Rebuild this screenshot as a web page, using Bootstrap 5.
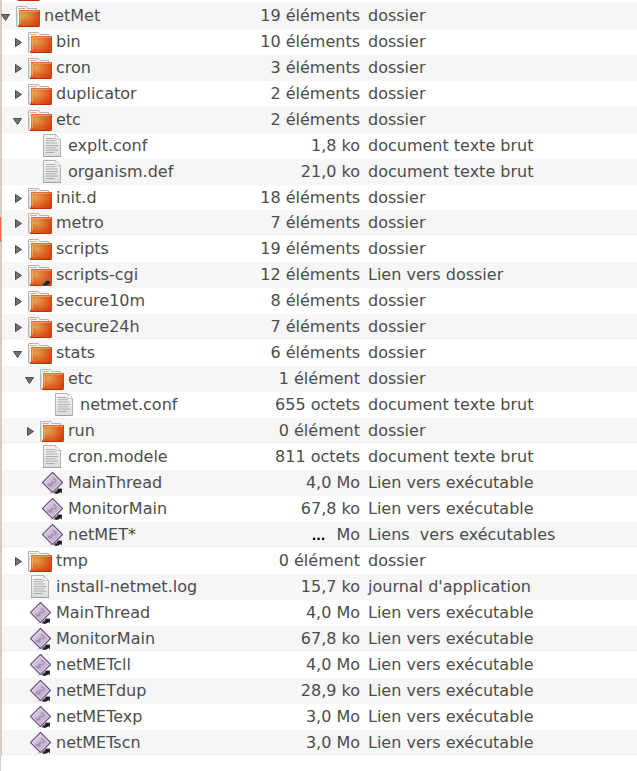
<!DOCTYPE html>
<html lang="fr">
<head>
<meta charset="utf-8">
<meta name="viewport" content="width=device-width, initial-scale=1">
<title>netMet</title>
<link rel="stylesheet" href="https://cdn.jsdelivr.net/npm/bootstrap@5.3.0/dist/css/bootstrap.min.css">
<script src="https://cdn.jsdelivr.net/npm/bootstrap@5.3.0/dist/js/bootstrap.bundle.min.js" defer></script>
<style>
body{font-family:"DejaVu Sans",sans-serif;font-size:16px;line-height:24px;color:#4c4c4c;background:#fff}
.pane{border-left:1px solid #dcd0ca}
.tree-pane{border-left:1px solid #d3c5be}
.above{height:3px;padding:0 0 1px 14px}
.tree{table-layout:fixed}
.tree tr{height:26px}
.tree tr.tight{height:25px}
.tree tr:nth-child(odd){background:#f6f6f6}
.tree td{padding:1px 0 0;vertical-align:top;white-space:nowrap}
.c-name{width:232px}
.c-size{width:126px}
.tree td:nth-child(2){text-align:right}
.tree td:nth-child(3){padding-left:8px}
.entry{gap:4px}
.l1{padding-left:12px}
.l2{padding-left:24px}
.l3{padding-left:36px}
.twist{width:10px;height:24px;flex:none;display:block}
.twist svg{display:block;width:10px;height:24px;overflow:visible}
.ico{width:24px;height:24px;flex:none;display:block;overflow:visible}
.dots{font-size:12px;color:#000;margin-right:6px}
.marker{top:217px;left:0;width:1px;height:25px;background:#f0683c}
</style>
</head>
<body>
<svg width="0" height="0" class="position-absolute" aria-hidden="true">
<defs>
<radialGradient id="gf" cx=".28" cy=".32" r=".8"><stop offset="0" stop-color="#e8a04f"/><stop offset=".5" stop-color="#dd702c"/><stop offset="1" stop-color="#d4410f"/></radialGradient>
<linearGradient id="gp" x1="0" y1="0" x2="0" y2="1"><stop offset="0" stop-color="#f6f6f6"/><stop offset="1" stop-color="#dcdcdc"/></linearGradient>
<linearGradient id="gd" x1="0" y1="0" x2="1" y2="1"><stop offset="0" stop-color="#ddd3e4"/><stop offset="1" stop-color="#b5a2c3"/></linearGradient>
<symbol id="folder" viewBox="0 0 24 24" overflow="visible">
<path d="M.5 22.500V2.500H10.500L11.500 4.500H20.500V8" fill="#f8f7f6" stroke="#b7b5b4"/>
<path d="M2 4.500H9" stroke="#efa67c"/>
<path d="M1.500 22V7" stroke="#dedbd9"/>
<path d="M3 6H24V21.500Q24 23 22.500 23H1.500L3 20Z" fill="url(#gf)"/>
<path d="M3 6.500H24" stroke="#dc6a3c"/>
<path d="M4.500 20V7.500H23" fill="none" stroke="#f3b57c" stroke-opacity=".6"/>
<path d="M23.500 7V21" stroke="#c94518" stroke-opacity=".7"/>
<path d="M2 22.500H23" stroke="#bd3009"/>
</symbol>
<symbol id="emblem" viewBox="0 0 24 24" overflow="visible">
<path d="M14 22.500q0-3 3.500-3.500l-1-1.500h5.500v5l-1.500-1.200q-2 1.700-4 1.700z" fill="#1c1c1c" stroke="#fff" stroke-opacity=".45" stroke-width=".5"/>
<path d="M15 21.500q1-1.200 2.500-1.300" fill="none" stroke="#777" stroke-width=".7"/>
</symbol>
<symbol id="doc" viewBox="0 0 24 24">
<path d="M3.500.500H15.500L20.500 5.500V22.500H3.500Z" fill="url(#gp)" stroke="#b4b4b4"/>
<path d="M15.500.500Q16.500 4.500 15.500 5.500H20.500Z" fill="#fff" stroke="#b9b9b9" stroke-width=".8"/>
<path d="M6 4.500H14M6 6.700H15M6 9H17M6 11.500H18M6 13.800H16M6 16.100H18M6 18.500H14" stroke="#a6a6a6" stroke-width=".9" stroke-linecap="round"/>
<path d="M3 22.500H21" stroke="#a0a0a0"/>
</symbol>
<symbol id="exe" viewBox="0 0 24 24" overflow="visible">
<path d="M12.500 1.500L22.500 11.500L12.500 21.500L2.500 11.500Z" fill="url(#gd)" stroke="#6d4d7f" stroke-width="1.100" stroke-linejoin="round"/>
<path d="M12.500 3.200L20.800 11.500L12.500 19.800L4.200 11.500Z" fill="none" stroke="#f0eaf4" stroke-width=".8"/>
<path d="M13.500 6.500l3 2 0 2-1.500 2-2-.5-1 3.500-3 .5-2-2 1-1.500 2 .5 1-2 2-1z" fill="#9b83ad" fill-opacity=".7"/>
<path d="M13 10.500l2-1" stroke="#ddd3e5"/>
<path d="M8 22.500l4-2 3 2z" fill="#777" fill-opacity=".3"/>
<use href="#emblem" width="24" height="24"/>
</symbol>
<symbol id="folderlink" viewBox="0 0 24 24" overflow="visible"><use href="#folder" width="24" height="24"/><use href="#emblem" width="24" height="24"/></symbol>
<symbol id="right" viewBox="0 0 10 24" overflow="visible"><path d="M1.500 8.500V16.500L7.500 12.500Z" fill="#727272" stroke="#4b4b4b"/></symbol>
<symbol id="down" viewBox="0 0 10 24" overflow="visible"><path d="M-.500 10.500H7.500L3.500 16.500Z" fill="#727272" stroke="#4b4b4b"/></symbol>
</defs>
</svg>
<main class="pane position-relative min-vh-100">
<div class="tree-pane">
<div class="above d-flex align-items-end overflow-hidden"><svg class="ico" aria-hidden="true"><use href="#folder"/></svg></div>
<table class="tree w-100">
<colgroup><col class="c-name"><col class="c-size"><col></colgroup>
<tbody>
<tr><td><div class="entry d-flex"><button class="twist btn p-0 border-0" aria-label="Replier netMet"><svg><use href="#down"/></svg></button><svg class="ico"><use href="#folder"/></svg><span>netMet</span></div></td><td>19 éléments</td><td>dossier</td></tr>
<tr><td><div class="entry d-flex l1"><button class="twist btn p-0 border-0" aria-label="Déplier bin"><svg><use href="#right"/></svg></button><svg class="ico"><use href="#folder"/></svg><span>bin</span></div></td><td>10 éléments</td><td>dossier</td></tr>
<tr><td><div class="entry d-flex l1"><button class="twist btn p-0 border-0" aria-label="Déplier cron"><svg><use href="#right"/></svg></button><svg class="ico"><use href="#folder"/></svg><span>cron</span></div></td><td>3 éléments</td><td>dossier</td></tr>
<tr><td><div class="entry d-flex l1"><button class="twist btn p-0 border-0" aria-label="Déplier duplicator"><svg><use href="#right"/></svg></button><svg class="ico"><use href="#folder"/></svg><span>duplicator</span></div></td><td>2 éléments</td><td>dossier</td></tr>
<tr><td><div class="entry d-flex l1"><button class="twist btn p-0 border-0" aria-label="Replier etc"><svg><use href="#down"/></svg></button><svg class="ico"><use href="#folder"/></svg><span>etc</span></div></td><td>2 éléments</td><td>dossier</td></tr>
<tr><td><div class="entry d-flex l2"><span class="twist"></span><svg class="ico"><use href="#doc"/></svg><span>explt.conf</span></div></td><td>1,8 ko</td><td>document texte brut</td></tr>
<tr><td><div class="entry d-flex l2"><span class="twist"></span><svg class="ico"><use href="#doc"/></svg><span>organism.def</span></div></td><td>21,0 ko</td><td>document texte brut</td></tr>
<tr class="tight"><td><div class="entry d-flex l1"><button class="twist btn p-0 border-0" aria-label="Déplier init.d"><svg><use href="#right"/></svg></button><svg class="ico"><use href="#folder"/></svg><span>init.d</span></div></td><td>18 éléments</td><td>dossier</td></tr>
<tr><td><div class="entry d-flex l1"><button class="twist btn p-0 border-0" aria-label="Déplier metro"><svg><use href="#right"/></svg></button><svg class="ico"><use href="#folder"/></svg><span>metro</span></div></td><td>7 éléments</td><td>dossier</td></tr>
<tr><td><div class="entry d-flex l1"><button class="twist btn p-0 border-0" aria-label="Déplier scripts"><svg><use href="#right"/></svg></button><svg class="ico"><use href="#folder"/></svg><span>scripts</span></div></td><td>19 éléments</td><td>dossier</td></tr>
<tr><td><div class="entry d-flex l1"><button class="twist btn p-0 border-0" aria-label="Déplier scripts-cgi"><svg><use href="#right"/></svg></button><svg class="ico"><use href="#folderlink"/></svg><span>scripts-cgi</span></div></td><td>12 éléments</td><td>Lien vers dossier</td></tr>
<tr><td><div class="entry d-flex l1"><button class="twist btn p-0 border-0" aria-label="Déplier secure10m"><svg><use href="#right"/></svg></button><svg class="ico"><use href="#folder"/></svg><span>secure10m</span></div></td><td>8 éléments</td><td>dossier</td></tr>
<tr><td><div class="entry d-flex l1"><button class="twist btn p-0 border-0" aria-label="Déplier secure24h"><svg><use href="#right"/></svg></button><svg class="ico"><use href="#folder"/></svg><span>secure24h</span></div></td><td>7 éléments</td><td>dossier</td></tr>
<tr><td><div class="entry d-flex l1"><button class="twist btn p-0 border-0" aria-label="Replier stats"><svg><use href="#down"/></svg></button><svg class="ico"><use href="#folder"/></svg><span>stats</span></div></td><td>6 éléments</td><td>dossier</td></tr>
<tr><td><div class="entry d-flex l2"><button class="twist btn p-0 border-0" aria-label="Replier stats/etc"><svg><use href="#down"/></svg></button><svg class="ico"><use href="#folder"/></svg><span>etc</span></div></td><td>1 élément</td><td>dossier</td></tr>
<tr><td><div class="entry d-flex l3"><span class="twist"></span><svg class="ico"><use href="#doc"/></svg><span>netmet.conf</span></div></td><td>655 octets</td><td>document texte brut</td></tr>
<tr><td><div class="entry d-flex l2"><button class="twist btn p-0 border-0" aria-label="Déplier run"><svg><use href="#right"/></svg></button><svg class="ico"><use href="#folder"/></svg><span>run</span></div></td><td>0 élément</td><td>dossier</td></tr>
<tr><td><div class="entry d-flex l2"><span class="twist"></span><svg class="ico"><use href="#doc"/></svg><span>cron.modele</span></div></td><td>811 octets</td><td>document texte brut</td></tr>
<tr><td><div class="entry d-flex l2"><span class="twist"></span><svg class="ico"><use href="#exe"/></svg><span>MainThread</span></div></td><td>4,0 Mo</td><td>Lien vers exécutable</td></tr>
<tr><td><div class="entry d-flex l2"><span class="twist"></span><svg class="ico"><use href="#exe"/></svg><span>MonitorMain</span></div></td><td>67,8 ko</td><td>Lien vers exécutable</td></tr>
<tr><td><div class="entry d-flex l2"><span class="twist"></span><svg class="ico"><use href="#exe"/></svg><span>netMET*</span></div></td><td><span class="dots fw-bold">...</span> Mo</td><td>Liens&nbsp; vers exécutables</td></tr>
<tr><td><div class="entry d-flex l1"><button class="twist btn p-0 border-0" aria-label="Déplier tmp"><svg><use href="#right"/></svg></button><svg class="ico"><use href="#folder"/></svg><span>tmp</span></div></td><td>0 élément</td><td>dossier</td></tr>
<tr><td><div class="entry d-flex l1"><span class="twist"></span><svg class="ico"><use href="#doc"/></svg><span>install-netmet.log</span></div></td><td>15,7 ko</td><td>journal d'application</td></tr>
<tr><td><div class="entry d-flex l1"><span class="twist"></span><svg class="ico"><use href="#exe"/></svg><span>MainThread</span></div></td><td>4,0 Mo</td><td>Lien vers exécutable</td></tr>
<tr><td><div class="entry d-flex l1"><span class="twist"></span><svg class="ico"><use href="#exe"/></svg><span>MonitorMain</span></div></td><td>67,8 ko</td><td>Lien vers exécutable</td></tr>
<tr><td><div class="entry d-flex l1"><span class="twist"></span><svg class="ico"><use href="#exe"/></svg><span>netMETcll</span></div></td><td>4,0 Mo</td><td>Lien vers exécutable</td></tr>
<tr><td><div class="entry d-flex l1"><span class="twist"></span><svg class="ico"><use href="#exe"/></svg><span>netMETdup</span></div></td><td>28,9 ko</td><td>Lien vers exécutable</td></tr>
<tr><td><div class="entry d-flex l1"><span class="twist"></span><svg class="ico"><use href="#exe"/></svg><span>netMETexp</span></div></td><td>3,0 Mo</td><td>Lien vers exécutable</td></tr>
<tr><td><div class="entry d-flex l1"><span class="twist"></span><svg class="ico"><use href="#exe"/></svg><span>netMETscn</span></div></td><td>3,0 Mo</td><td>Lien vers exécutable</td></tr>
</tbody>
</table>
</div>
</main>
<div class="marker position-absolute"></div>
</body>
</html>
